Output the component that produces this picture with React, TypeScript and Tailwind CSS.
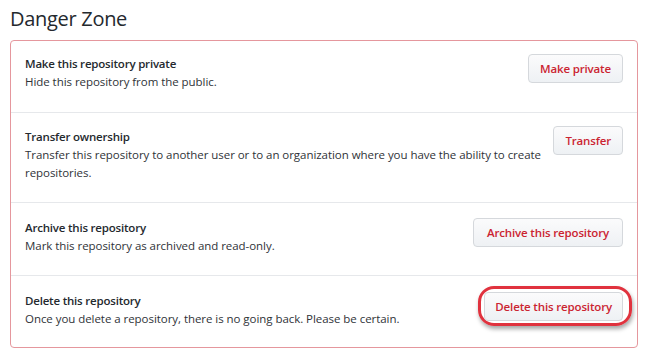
import React from "react";

const font = { fontFamily: '"Open Sans", "Noto Sans", Arial, sans-serif' };

function Btn({ label, ring, px }: { label: string; ring?: boolean; px: string }) {
  return (
    <div className="relative shrink-0">
      {ring && (
        <div className="absolute -left-[6px] -right-[9px] -top-[6px] -bottom-[5px] rounded-[16px] border-[3px] border-[#e0323e] shadow-[1px_3px_4px_rgba(0,0,0,0.35)]" />
      )}
      <button className={`relative h-[29px] ${px} whitespace-nowrap rounded-[4px] border border-[#d5d8dc] bg-gradient-to-b from-[#fbfbfc] to-[#eef1f4] text-[11.5px] font-semibold text-[#cb2431] leading-none tracking-[-0.15px]`}>
        {label}
      </button>
    </div>
  );
}

function Row({
  title,
  desc,
  btn,
  h,
  pt,
  bpt,
  px,
  ring,
  first,
}: {
  title: string;
  desc: string;
  btn: string;
  h: string;
  pt: string;
  bpt: string;
  px: string;
  ring?: boolean;
  first?: boolean;
}) {
  return (
    <div className={`flex justify-between gap-[8px] pl-[14px] pr-[14px] ${h} ${first ? "" : "border-t border-[#e6e8eb]"}`}>
      <div className={`${pt} flex-1 min-w-0`}>
        <div className="text-[11.5px] font-semibold leading-[18px] text-[#24292e] tracking-[-0.2px]">{title}</div>
        <div className="text-[11.5px] leading-[18px] text-[#2f3338] tracking-[-0.05px]">{desc}</div>
      </div>
      <div className={bpt}>
        <Btn label={btn} ring={ring} px={px} />
      </div>
    </div>
  );
}

export default function App() {
  return (
    <div className="w-[648px] h-[354px] bg-white pl-[10px] pt-[5px]" style={font}>
      <h2 className="text-[20px] leading-[28px] text-[#24292e] font-normal tracking-[-0.3px]">Danger Zone</h2>
      <div className="mt-[7px] w-[628px] h-[308px] border border-[#e5979d] rounded-[4px] flex flex-col">
        <Row
          first
          h="h-[71px]"
          pt="pt-[14px]"
          bpt="pt-[13px]"
          px="px-[11px]"
          title="Make this repository private"
          desc="Hide this repository from the public."
          btn="Make private"
        />
        <Row
          h="h-[90px]"
          pt="pt-[15px]"
          bpt="pt-[13px]"
          px="px-[11px]"
          title="Transfer ownership"
          desc="Transfer this repository to another user or to an organization where you have the ability to create repositories."
          btn="Transfer"
        />
        <Row
          h="h-[73px]"
          pt="pt-[16px]"
          bpt="pt-[15px]"
          px="px-[13px]"
          title="Archive this repository"
          desc="Mark this repository as archived and read-only."
          btn="Archive this repository"
        />
        <Row
          h="h-[72px]"
          pt="pt-[16px]"
          bpt="pt-[16px]"
          px="px-[10px]"
          ring
          title="Delete this repository"
          desc="Once you delete a repository, there is no going back. Please be certain."
          btn="Delete this repository"
        />
      </div>
    </div>
  );
}
